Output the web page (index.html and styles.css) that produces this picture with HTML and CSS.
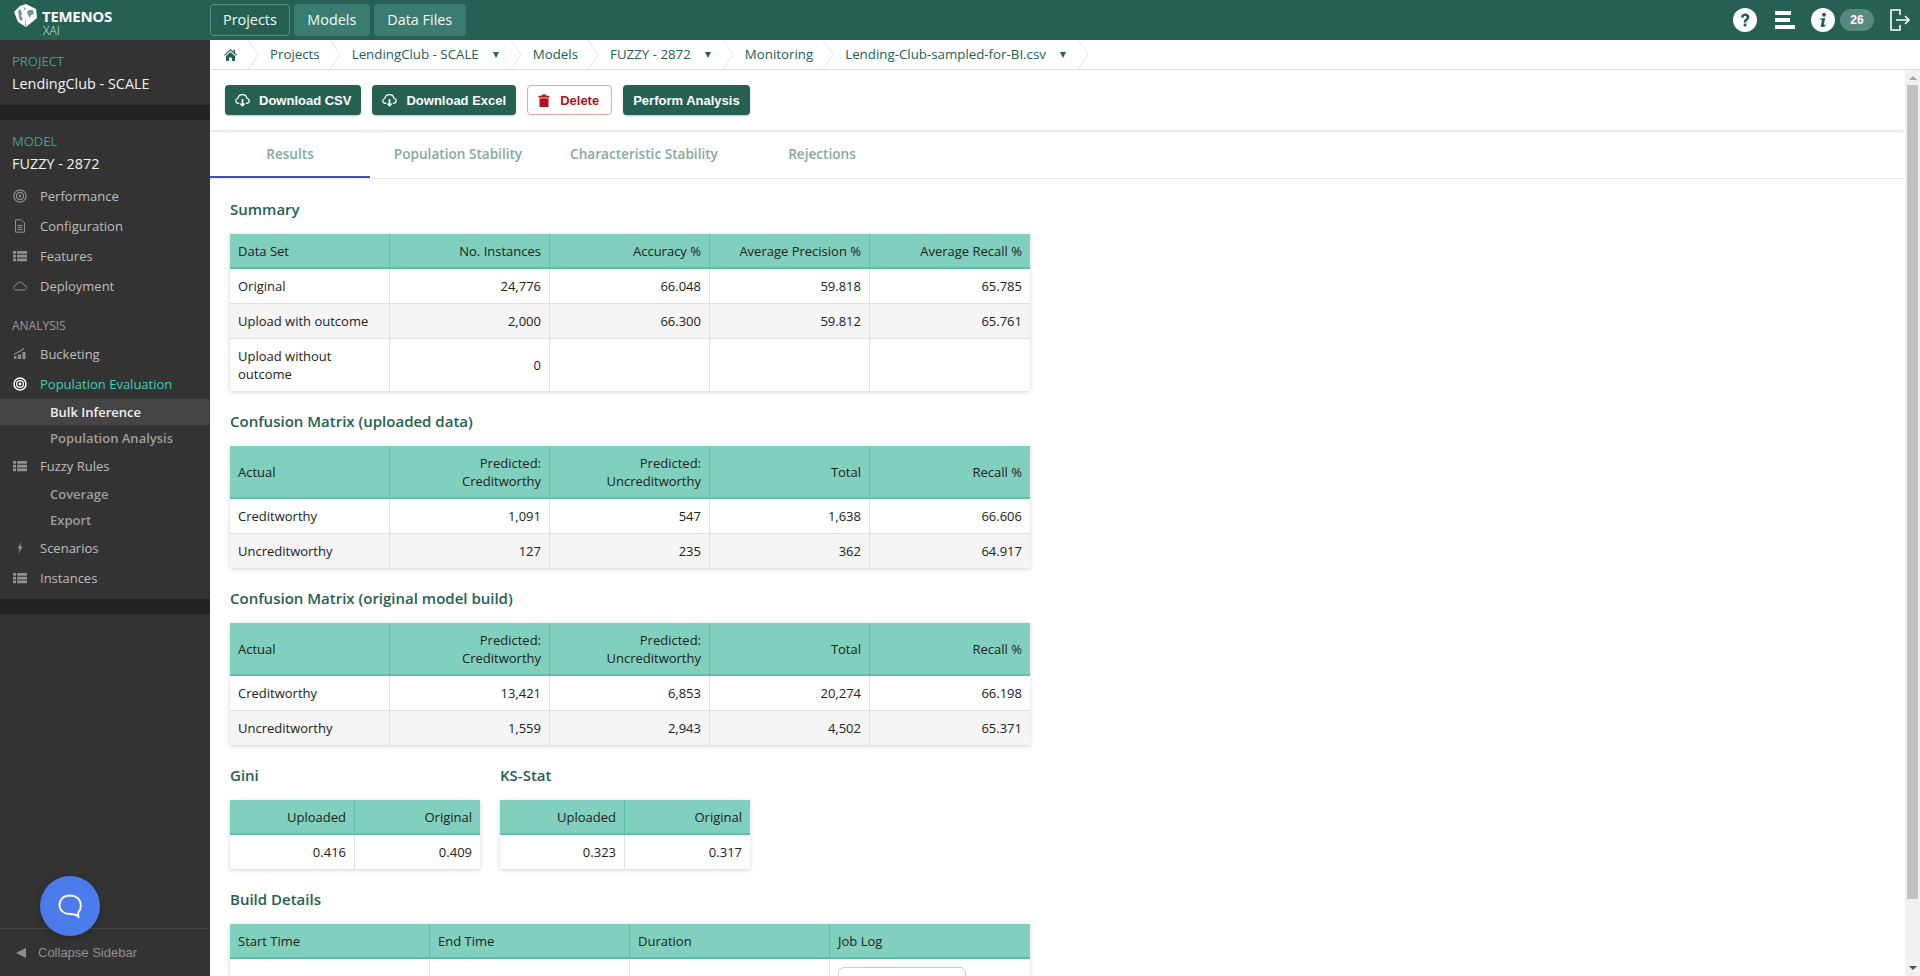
FILE: index.html
```html
<!DOCTYPE html>
<html lang="en">
<head>
  <meta charset="UTF-8" />
  <title>Temenos XAI - Bulk Inference</title>
  <link rel="stylesheet" href="styles.css">
</head>
<body>
  <header class="topbar">
    <div class="logo">
      <svg class="globe" width="23" height="24" viewBox="0 0 23 24">
        <path d="M0 8 L6 2 L12 0 L22 5 L23 14 L12 23 L4 18 Z" fill="#fff"/>
        <path d="M4 7 L6 5 L8 9 L7 12 L9 15 L7 17 L5 14 Z M10 3 L12 5 L10 6 Z M15 6 L19 6 L20 10 L17 11 L16 14 L14 11 L13 8 Z M11 12 L12 22 L11 22 Z" fill="#6f958c"/>
      </svg>
      <div class="logo-text">
        <span class="logo-name">TEMENOS</span>
        <span class="logo-sub">XAI</span>
      </div>
    </div>
    <nav class="topnav">
      <a class="topnav-btn active">Projects</a>
      <a class="topnav-btn">Models</a>
      <a class="topnav-btn">Data Files</a>
    </nav>
    <div class="top-icons">
      <svg width="24" height="24" viewBox="0 0 24 24">
        <circle cx="12" cy="12" r="12" fill="#fff"/>
        <path d="M8 9.5 C8 7 10 5.6 12.2 5.6 C14.6 5.6 16.4 7 16.4 9.2 C16.4 12 13.4 12 13.4 14.4 L10.8 14.4 C10.8 11 13.6 11 13.6 9.3 C13.6 8.5 13 8 12.1 8 C11.2 8 10.6 8.6 10.5 9.7 Z" fill="#256053"/>
        <rect x="10.7" y="15.6" width="2.8" height="2.8" fill="#256053"/>
      </svg>
      <svg class="icon-lines" width="20" height="18" viewBox="0 0 20 18">
        <rect x="0" y="0" width="16" height="4" fill="#fff"/>
        <rect x="0" y="7" width="15" height="4" fill="#fff"/>
        <rect x="0" y="14" width="20" height="4" fill="#fff"/>
      </svg>
      <svg class="icon-info" width="24" height="24" viewBox="0 0 24 24">
        <circle cx="12" cy="12" r="12" fill="#fff"/>
        <circle cx="13" cy="6.8" r="2" fill="#256053"/>
        <path d="M9 10.4 L14.2 10 L12.8 16.4 C12.7 17 13.2 17.2 14.4 16.2 L14.9 17 C13.6 18.6 12.2 19.2 10.9 19 C9.9 18.8 9.6 18 9.9 16.9 L11 11.8 L9 11.6 Z" fill="#256053"/>
      </svg>
      <span class="count-pill">26</span>
      <svg class="icon-exit" width="20" height="22" viewBox="0 0 20 22" fill="none" stroke="#fff" stroke-width="1.6">
        <path d="M10 6 V1 H1 V21 H10 V16"/>
        <path d="M6 11 H19 M15 7 L19 11 L15 15"/>
      </svg>
    </div>
  </header>

  <div class="app">
    <aside class="sidebar">
      <div class="side-scroll">
        <section class="side-block project-block">
          <div class="side-label">PROJECT</div>
          <div class="side-title">LendingClub - SCALE</div>
        </section>
        <div class="side-sep"></div>
        <section class="side-block model-block">
          <div class="side-label">MODEL</div>
          <div class="side-title">FUZZY - 2872</div>
        </section>
        <ul class="side-menu">
          <li class="side-item">
            <svg class="side-icon" viewBox="0 0 14 14" fill="none" stroke="#8f8f8f"><circle cx="7" cy="7" r="6.2" stroke-width="1.2"/><circle cx="7" cy="7" r="3.6" stroke-width="1.2"/><circle cx="7" cy="7" r="1.3" fill="#8f8f8f" stroke="none"/></svg>
            Performance
          </li>
          <li class="side-item">
            <svg class="side-icon" viewBox="0 0 14 14" fill="none" stroke="#8f8f8f"><path d="M2.5 .8 H8.5 L11.5 3.8 V13.2 H2.5 Z" stroke-width="1"/><path d="M4.5 6.5 H9.5 M4.5 8.5 H9.5 M4.5 10.5 H9.5" stroke-width="1"/></svg>
            Configuration
          </li>
          <li class="side-item">
            <svg class="side-icon" viewBox="0 0 14 14" fill="#8f8f8f"><path d="M0 2 H3 V4.8 H0 Z M4 2 H14 V4.8 H4 Z M0 5.7 H3 V8.5 H0 Z M4 5.7 H14 V8.5 H4 Z M0 9.4 H3 V12.2 H0 Z M4 9.4 H14 V12.2 H4 Z"/></svg>
            Features
          </li>
          <li class="side-item">
            <svg class="side-icon" viewBox="0 0 14 14" fill="none" stroke="#8f8f8f"><path d="M3 11 C1.4 11 .5 10 .5 8.8 C.5 7.6 1.5 6.8 2.6 6.8 C3.2 4.6 5 3.2 7.4 3.2 C9.2 3.2 10.6 4.4 11 6.2 C12.6 6.4 13.6 7.4 13.6 8.7 C13.6 10 12.6 11 11.2 11 Z" stroke-width="1"/></svg>
            Deployment
          </li>
          <li class="side-heading">ANALYSIS</li>
          <li class="side-item">
            <svg class="side-icon" viewBox="0 0 14 14" fill="#8f8f8f"><path d="M1 9 H3.5 V12 H1 Z M5 7.5 H8 V12 H5 Z M9.5 5 H12.5 V12 H9.5 Z"/><path d="M1 7.5 L7 4 L11 1.5" fill="none" stroke="#8f8f8f" stroke-width="1.2"/></svg>
            Bucketing
          </li>
          <li class="side-item current">
            <svg class="side-icon" viewBox="0 0 14 14" fill="none" stroke="#fff"><circle cx="7" cy="7" r="6" stroke-width="1.5"/><circle cx="7" cy="7" r="3.4" stroke-width="1.2"/><circle cx="7" cy="7" r="1.4" fill="#fff" stroke="none"/></svg>
            Population Evaluation
          </li>
          <li class="side-sub selected">Bulk Inference</li>
          <li class="side-sub">Population Analysis</li>
          <li class="side-item">
            <svg class="side-icon" viewBox="0 0 14 14" fill="#8f8f8f"><path d="M0 2 H3 V4.8 H0 Z M4 2 H14 V4.8 H4 Z M0 5.7 H3 V8.5 H0 Z M4 5.7 H14 V8.5 H4 Z M0 9.4 H3 V12.2 H0 Z M4 9.4 H14 V12.2 H4 Z"/></svg>
            Fuzzy Rules
          </li>
          <li class="side-sub">Coverage</li>
          <li class="side-sub">Export</li>
          <li class="side-item">
            <svg class="side-icon" viewBox="0 0 14 14" fill="#8f8f8f"><path d="M8.5 .5 L4.5 7.5 H6.8 L5 13.5 L9.8 5.5 H7.4 Z"/></svg>
            Scenarios
          </li>
          <li class="side-item">
            <svg class="side-icon" viewBox="0 0 14 14" fill="#8f8f8f"><path d="M0 2 H3 V4.8 H0 Z M4 2 H14 V4.8 H4 Z M0 5.7 H3 V8.5 H0 Z M4 5.7 H14 V8.5 H4 Z M0 9.4 H3 V12.2 H0 Z M4 9.4 H14 V12.2 H4 Z"/></svg>
            Instances
          </li>
        </ul>
        <div class="side-sep end-sep"></div>
      </div>
      <div class="collapse-bar"><span class="collapse-arrow"></span>Collapse Sidebar</div>
    </aside>

    <main class="main">
      <nav class="crumbs">
        <span class="crumb crumb-home">
          <svg width="13" height="12" viewBox="0 0 13 12" fill="#256053"><path d="M6.5 0 L9.5 2.7 V.8 H11 V4 L13 5.9 L12.2 6.7 L6.5 1.6 L.8 6.7 L0 5.9 Z M2 7 L6.5 3 L11 7 V12 H8 V8.5 H5 V12 H2 Z"/></svg>
        </span>
        <span class="crumb">Projects</span>
        <span class="crumb has-caret">LendingClub - SCALE</span>
        <span class="crumb">Models</span>
        <span class="crumb has-caret">FUZZY - 2872</span>
        <span class="crumb">Monitoring</span>
        <span class="crumb has-caret">Lending-Club-sampled-for-BI.csv</span>
      </nav>
      <div class="page">
        <div class="page-body">
          <div class="toolbar">
            <button class="btn">
              <svg class="btn-icon" viewBox="0 0 16 14" fill="none" stroke="#fff" stroke-width="1.3"><path d="M4.5 10.5 H3.6 C1.9 10.5 .8 9.3 .8 7.9 C.8 6.6 1.8 5.6 3 5.4 C3.4 3 5.4 1.2 8 1.2 C10.4 1.2 12.4 3 12.8 5.4 C14.2 5.6 15.2 6.6 15.2 7.9 C15.2 9.3 14.1 10.5 12.4 10.5 H11.5"/><path d="M8 6 V13 M5.8 10.8 L8 13 L10.2 10.8" stroke-width="1.8"/></svg>
              Download CSV
            </button>
            <button class="btn">
              <svg class="btn-icon" viewBox="0 0 16 14" fill="none" stroke="#fff" stroke-width="1.3"><path d="M4.5 10.5 H3.6 C1.9 10.5 .8 9.3 .8 7.9 C.8 6.6 1.8 5.6 3 5.4 C3.4 3 5.4 1.2 8 1.2 C10.4 1.2 12.4 3 12.8 5.4 C14.2 5.6 15.2 6.6 15.2 7.9 C15.2 9.3 14.1 10.5 12.4 10.5 H11.5"/><path d="M8 6 V13 M5.8 10.8 L8 13 L10.2 10.8" stroke-width="1.8"/></svg>
              Download Excel
            </button>
            <button class="btn btn-danger">
              <svg class="btn-icon trash" viewBox="0 0 11 13" fill="#b01217"><path d="M0 1.8 H3.4 V.4 H7.6 V1.8 H11 V3.4 H0 Z M1 4.2 H10 V13 H1 Z"/></svg>
              Delete
            </button>
            <button class="btn">Perform Analysis</button>
          </div>

          <div class="tabs">
            <a class="tab active">Results</a>
            <a class="tab">Population Stability</a>
            <a class="tab">Characteristic Stability</a>
            <a class="tab">Rejections</a>
          </div>

          <div class="content">
            <h3>Summary</h3>
            <table class="grid">
              <thead>
                <tr><th>Data Set</th><th class="num">No. Instances</th><th class="num">Accuracy %</th><th class="num">Average Precision %</th><th class="num">Average Recall %</th></tr>
              </thead>
              <tbody>
                <tr><td>Original</td><td class="num">24,776</td><td class="num">66.048</td><td class="num">59.818</td><td class="num">65.785</td></tr>
                <tr><td>Upload with outcome</td><td class="num">2,000</td><td class="num">66.300</td><td class="num">59.812</td><td class="num">65.761</td></tr>
                <tr><td>Upload without outcome</td><td class="num">0</td><td class="num"></td><td class="num"></td><td class="num"></td></tr>
              </tbody>
            </table>

            <h3>Confusion Matrix (uploaded data)</h3>
            <table class="grid">
              <thead>
                <tr><th>Actual</th><th class="num">Predicted:<br>Creditworthy</th><th class="num">Predicted:<br>Uncreditworthy</th><th class="num">Total</th><th class="num">Recall %</th></tr>
              </thead>
              <tbody>
                <tr><td>Creditworthy</td><td class="num">1,091</td><td class="num">547</td><td class="num">1,638</td><td class="num">66.606</td></tr>
                <tr><td>Uncreditworthy</td><td class="num">127</td><td class="num">235</td><td class="num">362</td><td class="num">64.917</td></tr>
              </tbody>
            </table>

            <h3>Confusion Matrix (original model build)</h3>
            <table class="grid">
              <thead>
                <tr><th>Actual</th><th class="num">Predicted:<br>Creditworthy</th><th class="num">Predicted:<br>Uncreditworthy</th><th class="num">Total</th><th class="num">Recall %</th></tr>
              </thead>
              <tbody>
                <tr><td>Creditworthy</td><td class="num">13,421</td><td class="num">6,853</td><td class="num">20,274</td><td class="num">66.198</td></tr>
                <tr><td>Uncreditworthy</td><td class="num">1,559</td><td class="num">2,943</td><td class="num">4,502</td><td class="num">65.371</td></tr>
              </tbody>
            </table>

            <div class="stat-row">
              <div class="stat">
                <h3>Gini</h3>
                <table class="grid small">
                  <thead><tr><th class="num">Uploaded</th><th class="num">Original</th></tr></thead>
                  <tbody><tr><td class="num">0.416</td><td class="num">0.409</td></tr></tbody>
                </table>
              </div>
              <div class="stat">
                <h3>KS-Stat</h3>
                <table class="grid small">
                  <thead><tr><th class="num">Uploaded</th><th class="num">Original</th></tr></thead>
                  <tbody><tr><td class="num">0.323</td><td class="num">0.317</td></tr></tbody>
                </table>
              </div>
            </div>

            <h3>Build Details</h3>
            <table class="grid">
              <thead><tr><th>Start Time</th><th>End Time</th><th>Duration</th><th>Job Log</th></tr></thead>
              <tbody><tr><td></td><td></td><td></td><td><button class="log-btn"></button></td></tr></tbody>
            </table>
          </div>
        </div>
        <div class="scrollbar">
          <span class="scroll-up"></span>
          <span class="scroll-thumb"></span>
          <span class="scroll-down"></span>
        </div>
      </div>
    </main>
  </div>

  <div class="chat-bubble">
    <svg width="26" height="26" viewBox="0 0 26 26" fill="none" stroke="#fff" stroke-width="1.8"><path d="M13 2.5 C6.8 2.5 2.5 6.4 2.5 12 C2.5 17.6 6.8 21 13 21 C15 21 18.6 21 21.4 23.6 L21.2 19.4 C23 17.6 23.8 15 23.8 12 C23.8 6.4 19.2 2.5 13 2.5 Z"/></svg>
  </div>
</body>
</html>
```

FILE: styles.css
```css
* {
  box-sizing: border-box;
}
html, body {
  height: 100%;
}
body {
  margin: 0;
  overflow: hidden;
  font-family: "Open Sans", sans-serif;
  font-size: 13px;
  color: #212121;
  background: #fff;
  display: flex;
  flex-direction: column;
}

/* top bar */
.topbar {
  height: 40px;
  flex: none;
  display: flex;
  align-items: center;
  background: #256053;
  color: #fff;
}
.logo {
  width: 210px;
  flex: none;
  display: flex;
  align-items: flex-start;
  padding-left: 14px;
  gap: 5px;
}
.globe {
  margin-top: 1px;
}
.logo-text {
  display: flex;
  flex-direction: column;
  height: 34px;
  padding-top: 5px;
}
.logo-name {
  font-size: 15px;
  font-weight: 700;
  line-height: 17px;
  letter-spacing: -0.3px;
}
.logo-sub {
  font-size: 12px;
  font-weight: 300;
  line-height: 12px;
  margin-left: 1px;
  color: #d5e2df;
}
.topnav {
  display: flex;
  gap: 4px;
}
.topnav-btn {
  height: 32px;
  padding: 0 13.5px;
  line-height: 32px;
  font-size: 14.4px;
  border-radius: 4px;
  background: #3a7d6f;
  color: #f4f8f7;
}
.topnav-btn.active {
  padding: 0 12px;
  background: #256053;
  border: 1px solid #5d8f84;
  line-height: 30px;
}
.top-icons {
  margin-left: auto;
  display: flex;
  align-items: center;
  padding-right: 10px;
}
.icon-lines {
  margin-left: 18px;
}
.icon-info {
  margin-left: 16px;
}
.count-pill {
  width: 34px;
  height: 22px;
  margin-left: 5px;
  border-radius: 11px;
  background: #5a8a7f;
  text-align: center;
  line-height: 22px;
  font-family: "Liberation Sans", sans-serif;
  font-size: 12px;
  font-weight: 700;
}
.icon-exit {
  margin-left: 16px;
}

/* sidebar */
.app {
  flex: 1;
  min-height: 0;
  display: flex;
}
.sidebar {
  width: 210px;
  flex: none;
  display: flex;
  flex-direction: column;
  background: #333;
}
.side-scroll {
  flex: 1;
}
.side-block {
  padding: 0 12px;
}
.project-block {
  height: 65px;
  padding-top: 11px;
}
.model-block {
  height: 61px;
  padding-top: 11px;
}
.side-sep {
  height: 15px;
  background: #232323;
}
.side-label {
  color: #3fa08d;
  font-size: 13px;
  line-height: 20px;
}
.side-title {
  color: #f2f2f2;
  font-size: 14.4px;
  line-height: 26px;
}
.side-menu {
  list-style: none;
  margin: 0;
  padding: 0;
}
.side-item {
  height: 30px;
  display: flex;
  align-items: center;
  padding-left: 13px;
  color: #bdbdbd;
  font-size: 13px;
}
.side-item.current {
  color: #3fcfb2;
}
.side-icon {
  width: 14px;
  height: 14px;
  margin-right: 13px;
  flex: none;
}
.side-heading {
  height: 38px;
  padding: 15px 0 0 12px;
  line-height: 20px;
  font-size: 12px;
  color: #9a9a9a;
}
.side-sub {
  height: 26px;
  line-height: 26px;
  padding-left: 50px;
  color: #9e9e9e;
  font-size: 13px;
  font-weight: 600;
}
.side-sub.selected {
  background: #444;
  color: #f0f0f0;
}
.end-sep {
  margin-top: 6px;
}
.collapse-bar {
  height: 48px;
  border-top: 1px solid #474747;
  padding-left: 16px;
  display: flex;
  align-items: center;
  font-family: "Liberation Sans", sans-serif;
  font-size: 13px;
  color: #8f8f8f;
}
.collapse-arrow {
  width: 0;
  height: 0;
  margin-right: 12px;
  border-top: 5px solid transparent;
  border-bottom: 5px solid transparent;
  border-right: 10px solid #8f8f8f;
}

/* breadcrumb */
.main {
  flex: 1;
  min-width: 0;
  display: flex;
  flex-direction: column;
}
.crumbs {
  height: 30px;
  flex: none;
  display: flex;
  border-bottom: 1px solid #ddd;
  color: #256053;
  font-size: 13.3px;
}
.crumb {
  position: relative;
  padding: 0 20px 0 12px;
  line-height: 29px;
}
.crumb::after {
  content: "";
  position: absolute;
  top: 0;
  right: 0;
  width: 10px;
  height: 29px;
  background:
    linear-gradient(to top right, transparent calc(50% - .6px), #ddd, transparent calc(50% + .6px)) top / 100% 50% no-repeat,
    linear-gradient(to bottom right, transparent calc(50% - .6px), #ddd, transparent calc(50% + .6px)) bottom / 100% 50% no-repeat;
}
.crumb-home {
  width: 48px;
  padding: 0 0 0 14px;
  display: flex;
  align-items: center;
}
.has-caret {
  padding-right: 42px;
}
.has-caret::before {
  content: "";
  position: absolute;
  right: 22px;
  top: 12px;
  border-left: 3px solid transparent;
  border-right: 3px solid transparent;
  border-top: 6px solid #256053;
}

.page {
  flex: 1;
  min-height: 0;
  display: flex;
}
.page-body {
  flex: 1;
  min-width: 0;
  overflow: hidden;
}
.scrollbar {
  width: 15px;
  flex: none;
  background: #f1f1f1;
  display: flex;
  flex-direction: column;
  align-items: center;
}
.scroll-up {
  width: 0;
  height: 0;
  margin: 6px 0 5px;
  border-left: 4px solid transparent;
  border-right: 4px solid transparent;
  border-bottom: 4px solid #a3a3a3;
}
.scroll-thumb {
  width: 11px;
  height: 814px;
  background: #c1c1c1;
}
.scroll-down {
  width: 0;
  height: 0;
  margin-top: auto;
  margin-bottom: 6px;
  border-left: 4px solid transparent;
  border-right: 4px solid transparent;
  border-top: 4px solid #505050;
}

/* toolbar */
.toolbar {
  height: 60px;
  display: flex;
  align-items: center;
  gap: 11px;
  padding: 0 0 0 15px;
  box-shadow: 0 1px 3px rgba(0, 0, 0, .16);
}
.btn {
  height: 30px;
  padding: 0 10px;
  display: flex;
  align-items: center;
  border: none;
  border-radius: 4px;
  background: #256053;
  color: #fff;
  font-family: "Liberation Sans", sans-serif;
  font-size: 13px;
  font-weight: 700;
  box-shadow: 0 1px 2px rgba(0, 0, 0, .25);
}
.btn-icon {
  width: 15px;
  height: 14px;
  margin-right: 9px;
}
.btn-danger {
  padding-right: 12px;
  background: #fff;
  color: #b01217;
  border: 1px solid #e8a7a9;
  box-shadow: none;
}
.trash {
  width: 12px;
  height: 13px;
  margin-right: 10px;
}

/* tabs */
.tabs {
  height: 49px;
  display: flex;
  border-bottom: 1px solid #e6e6e6;
}
.tab {
  width: 160px;
  height: 48px;
  line-height: 48px;
  text-align: center;
  font-weight: 600;
  font-size: 13.6px;
  color: #87a9a1;
}
.tab:nth-child(2) {
  width: 176px;
}
.tab:nth-child(3) {
  width: 196px;
}
.tab.active {
  border-bottom: 2px solid #3f51b5;
}

/* tables */
.content {
  padding: 0 20px;
}
h3 {
  margin: 0;
  height: 55px;
  padding-top: 20px;
  font-size: 15px;
  line-height: 20px;
  font-weight: 600;
  color: #256053;
}
.grid {
  width: 800px;
  table-layout: fixed;
  border-collapse: separate;
  border-spacing: 0;
  box-shadow: 0 1px 4px rgba(0, 0, 0, .18);
}
.grid th {
  padding: 8px 8px 7px;
  background: #80d0bd;
  border-right: 1px solid #5dbfa8;
  border-bottom: 2px solid #5dbfa8;
  font-weight: 400;
  line-height: 18px;
  text-align: left;
}
.grid td {
  padding: 8px;
  border-right: 1px solid #e0e0e0;
  border-bottom: 1px solid #e0e0e0;
  line-height: 18px;
}
.grid th:last-child {
  border-right: none;
}
.grid td:last-child {
  border-right: none;
}
.grid tbody tr:last-child td {
  border-bottom: none;
}
.grid tbody tr:nth-child(even) {
  background: #f5f5f5;
}
.grid .num {
  text-align: right;
}
.stat-row {
  display: flex;
  gap: 20px;
}
.grid.small {
  width: 250px;
}
.log-btn {
  display: block;
  width: 128px;
  height: 30px;
  border: 1px solid #ccc;
  border-radius: 6px;
  background: #fff;
}

/* chat bubble floats over the sidebar */
.chat-bubble {
  position: fixed;
  left: 40px;
  top: 876px;
  width: 60px;
  height: 60px;
  border-radius: 50%;
  background: #4c7cec;
  display: flex;
  align-items: center;
  justify-content: center;
  box-shadow: 0 2px 6px rgba(0, 0, 0, .25);
}
```
